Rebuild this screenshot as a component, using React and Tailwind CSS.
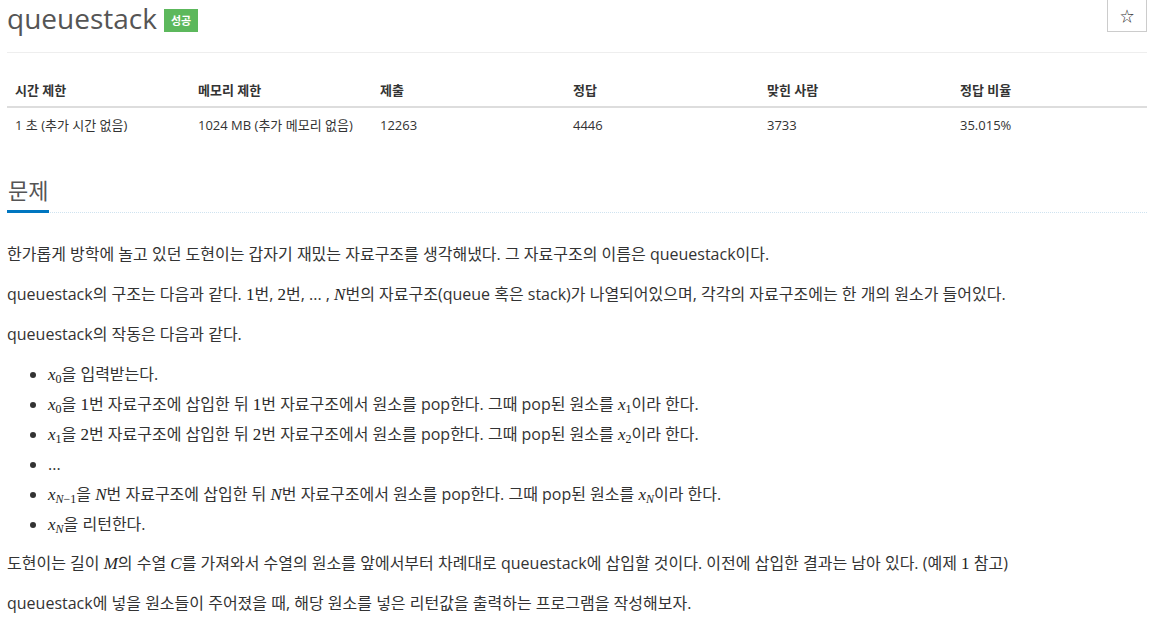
import React from "react";

const serif = "font-['Liberation_Serif',serif]";

const M = ({ children }) => (
  <span className={`${serif} italic text-[17px] leading-none text-[#222]`}>{children}</span>
);

const Num = ({ children }) => (
  <span className={`${serif} text-[17px] leading-none text-[#222]`}>{children}</span>
);

const X = ({ sub }) => (
  <span className={`${serif} text-[17px] leading-none text-[#222]`}>
    <span className="italic">x</span>
    <span className="text-[12px] leading-none relative top-[3px]">{sub}</span>
  </span>
);

export default function App() {
  const font = "font-['Open_Sans','Noto_Sans_CJK_KR',sans-serif]";
  const heads = ["시간 제한", "메모리 제한", "제출", "정답", "맞힌 사람", "정답 비율"];
  const vals = ["1 초 (추가 시간 없음)", "1024 MB (추가 메모리 없음)", "12263", "4446", "3733", "35.015%"];
  const cols = "grid grid-cols-[183px_182px_193px_194px_193px_195px]";
  return (
    <div className={`${font} bg-white text-[#333] w-[1152px] min-h-[625px] pl-[7px] pr-[5px]`}>
      <div className="flex items-start justify-between h-[53px] border-b border-[#eee]">
        <div className="flex items-center gap-[7px]">
          <h1 className="text-[28px] leading-[36px] text-[#555] font-normal">queuestack</h1>
          <span className="bg-[#5cb85c] text-white text-[11px] font-bold leading-[23px] px-[7px] mt-[4px]">성공</span>
        </div>
        <button className="w-[40px] h-[32px] border border-[#ccc] border-t-0 flex items-center justify-center text-[14px] text-[#333]">☆</button>
      </div>

      <div className="mt-[22px] text-[13px]">
        <div className={`${cols} h-[33px] items-center border-b-2 border-[#ddd] font-bold`}>
          {heads.map((h) => (
            <div key={h} className="px-[8px]">{h}</div>
          ))}
        </div>
        <div className={`${cols} h-[35px] items-center`}>
          {vals.map((v) => (
            <div key={v} className="px-[8px]">{v}</div>
          ))}
        </div>
      </div>

      <div className="mt-[31px] border-b border-dotted border-[#cfe3f0] flex">
        <h2 className="text-[22px] leading-[32px] text-[#555] border-b-[3px] border-[#0076c0] pb-[4px] mb-[-1px] px-[1px]">문제</h2>
      </div>

      <div className="mt-[26px] text-[16px] leading-[30px]">
        <p className="mb-[10px]">한가롭게 방학에 놀고 있던 도현이는 갑자기 재밌는 자료구조를 생각해냈다. 그 자료구조의 이름은 queuestack이다.</p>
        <p className="mb-[10px]">queuestack의 구조는 다음과 같다. <Num>1</Num>번, <Num>2</Num>번, ... , <M>N</M>번의 자료구조(queue 혹은 stack)가 나열되어있으며, 각각의 자료구조에는 한 개의 원소가 들어있다.</p>
        <p className="mb-[10px]">queuestack의 작동은 다음과 같다.</p>
        <ul className="list-disc pl-[41px] mb-[9px]">
          <li><X sub="0" />을 입력받는다.</li>
          <li><X sub="0" />을 <Num>1</Num>번 자료구조에 삽입한 뒤 <Num>1</Num>번 자료구조에서 원소를 pop한다. 그때 pop된 원소를 <X sub="1" />이라 한다.</li>
          <li><X sub="1" />을 <Num>2</Num>번 자료구조에 삽입한 뒤 <Num>2</Num>번 자료구조에서 원소를 pop한다. 그때 pop된 원소를 <X sub="2" />이라 한다.</li>
          <li>...</li>
          <li><X sub={<><span className="italic">N</span>−1</>} />을 <M>N</M>번 자료구조에 삽입한 뒤 <M>N</M>번 자료구조에서 원소를 pop한다. 그때 pop된 원소를 <X sub={<span className="italic">N</span>} />이라 한다.</li>
          <li><X sub={<span className="italic">N</span>} />을 리턴한다.</li>
        </ul>
        <p className="mb-[10px]">도현이는 길이 <M>M</M>의 수열 <M>C</M>를 가져와서 수열의 원소를 앞에서부터 차례대로 queuestack에 삽입할 것이다. 이전에 삽입한 결과는 남아 있다. (예제 <Num>1</Num> 참고)</p>
        <p className="mb-[10px]">queuestack에 넣을 원소들이 주어졌을 때, 해당 원소를 넣은 리턴값을 출력하는 프로그램을 작성해보자.</p>
      </div>
    </div>
  );
}
